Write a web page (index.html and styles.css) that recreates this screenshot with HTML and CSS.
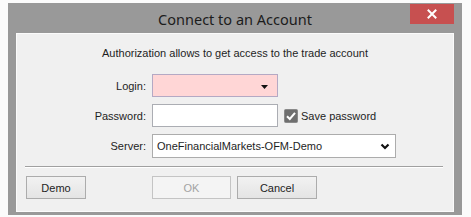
FILE: index.html
```html
<!DOCTYPE html>
<html>
<head>
<meta charset="utf-8">
<link rel="stylesheet" href="styles.css">
</head>
<body>
<div class="window">
  <div class="titlebar">
    <span></span>
    <div class="title">Connect to an Account</div>
    <div class="close">
      <svg width="10" height="10" viewBox="0 0 10 10"><path d="M1.5 1.5 L8.5 8.5 M8.5 1.5 L1.5 8.5" stroke="#fff" stroke-width="2" stroke-linecap="square"/></svg>
    </div>
  </div>
  <div class="panel">
    <div class="info">Authorization allows to get access to the trade account</div>
    <div class="form">
      <label class="lbl">Login:</label>
      <div class="input login"><svg class="tri" width="7" height="4" viewBox="0 0 7 4"><path d="M0 0 H7 L3.5 4 Z" fill="#111"/></svg></div>
      <span></span>
      <label class="lbl">Password:</label>
      <div class="input"></div>
      <div class="check">
        <svg width="14" height="14" viewBox="0 0 14 14"><rect x="0.5" y="0.5" width="13" height="13" rx="1" fill="#6f6f6f" stroke="#8a8a8a"/><path d="M3 7.2 L5.8 10 L11 3.8" stroke="#fff" stroke-width="2" fill="none"/></svg>
        <span>Save password</span>
      </div>
      <label class="lbl">Server:</label>
      <div class="input select"><span>OneFinancialMarkets-OFM-Demo</span>
        <svg width="10" height="7" viewBox="0 0 10 7"><path d="M1.5 1.5 L5 5 L8.5 1.5" stroke="#111" stroke-width="2.2" fill="none"/></svg>
      </div>
    </div>
    <div class="sep"></div>
    <div class="buttons">
      <div class="btn demo">Demo</div>
      <div class="btn ok disabled">OK</div>
      <div class="btn cancel">Cancel</div>
    </div>
  </div>
</div>
</body>
</html>
```
FILE: styles.css
```css
html, body { margin: 0; padding: 0; }
body {
  background: #fbfbfb;
  width: 471px;
  height: 217px;
  overflow: hidden;
  font-family: "Liberation Sans", Arial, sans-serif;
  font-size: 11px;
  color: #1e1e1e;
}
.window {
  box-sizing: border-box;
  margin: 3px 0 0 8px;
  width: 454px;
  height: 212px;
  background: #999999;
  padding: 0 8px 3px 8px;
  display: flex;
  flex-direction: column;
}
.titlebar {
  height: 30px;
  display: grid;
  grid-template-columns: 1fr auto 1fr;
  align-items: start;
}
.title {
  font-family: "Noto Sans", sans-serif;
  font-size: 14.5px;
  color: #1c1c1c;
  padding-top: 7px;
  line-height: 18px;
}
.close {
  justify-self: end;
  margin-top: 1px;
  width: 44px;
  height: 20px;
  background: #c75050;
  display: flex;
  align-items: center;
  justify-content: center;
}
.panel {
  box-sizing: border-box;
  flex: 1;
  background: #f0f0f0;
  border: 1px solid #fbfbfb;
  padding: 0 0 0 8px;
}
.info {
  text-align: center;
  margin: 12px 0 0 -8px;
  line-height: 14px;
}
.form {
  margin-top: 14px;
  display: grid;
  grid-template-columns: 121px 126px auto;
  grid-template-rows: 23px 23px 24px;
  column-gap: 6px;
  row-gap: 7px;
  align-items: center;
}
.lbl { text-align: right; }
.input {
  box-sizing: border-box;
  height: 23px;
  border: 1px solid #abadb3;
  background: #fff;
  position: relative;
}
.login {
  background: #ffd6d6;
  border-color: #b4a9c4;
}
.tri { position: absolute; right: 9px; top: 10px; }
.check {
  display: flex;
  align-items: center;
  gap: 3px;
  font-size: 11px;
}
.select {
  grid-column: 2 / 4;
  width: 244px;
  height: 24px;
  border-color: #acacac;
  display: flex;
  align-items: center;
  justify-content: space-between;
  padding: 0 5px 0 4px;
  font-size: 11px;
}
.sep {
  margin: 8px 0 0 0;
  width: 418px;
  height: 1px;
  background: #a0a0a0;
  border-bottom: 1px solid #ffffff;
}
.buttons {
  margin-top: 8px;
  display: flex;
}
.btn {
  box-sizing: border-box;
  height: 23px;
  border: 1px solid #acacac;
  background: linear-gradient(#f2f2f2, #e4e4e4);
  display: flex;
  align-items: center;
  justify-content: center;
  font-size: 11px;
}
.demo { width: 60px; margin-left: 1px; }
.ok { width: 79px; margin-left: 66px; }
.cancel { width: 80px; margin-left: 6px; }
.disabled {
  color: #a3a3a3;
  border-color: #c4c4c4;
  background: #f4f4f4;
}
```
